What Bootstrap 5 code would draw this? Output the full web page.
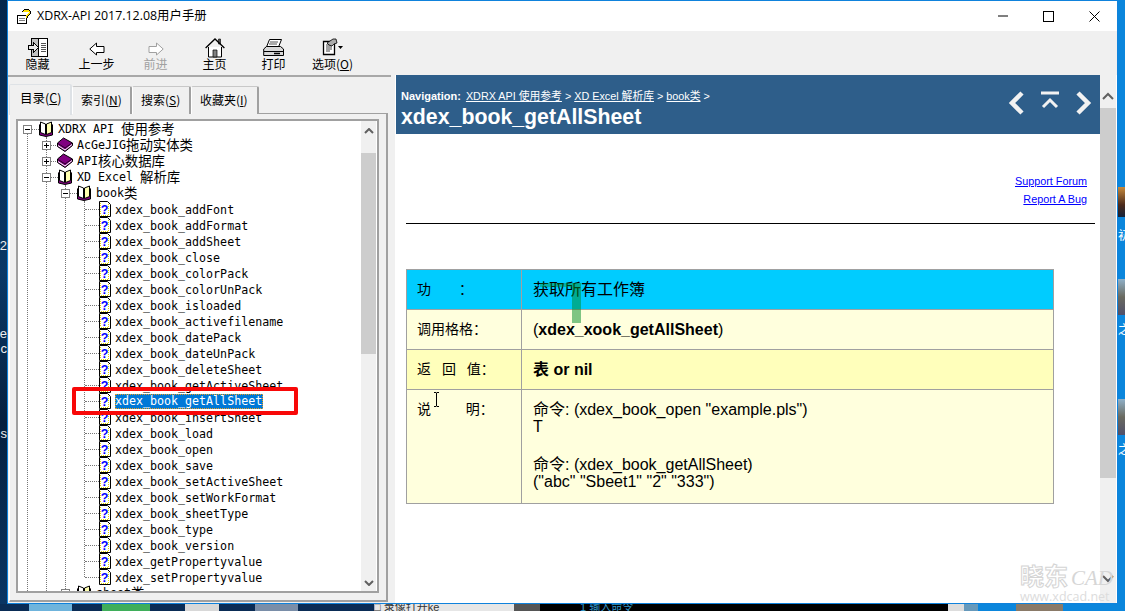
<!doctype html>
<html lang="zh-CN">
<head>
    <meta charset="utf-8">
    <meta name="viewport" content="width=device-width, initial-scale=1">
    <title>XDRX-API 2017.12.08用户手册</title>
    <link href="https://cdn.jsdelivr.net/npm/bootstrap@5.3.3/dist/css/bootstrap.min.css" rel="stylesheet">
    <style>
        html, body { height: 611px; overflow: hidden; }
        body { background: #0a2c55; font-family: "Liberation Sans", "Noto Sans CJK SC", sans-serif; color: #000; }

        /* desktop that shows around the window */
        .desk-left { width: 7px; height: 604px; overflow: hidden; background: linear-gradient(#04264c, #0a3866 45%, #06203f 70%, #0a3563); color: #eee; font-size: 13px; line-height: 15px; }
        .desk-left span { display: block; width: 7px; direction: rtl; white-space: nowrap; }
        .dl-a { margin-top: 238px; }
        .dl-b { margin-top: 73px; }
        .dl-c { margin-top: 70px; }
        .desk-right { width: 7px; height: 604px; overflow: hidden; background: #0b86dc; color: #fff; font-size: 12px; line-height: 14px; }
        .desk-thumb { height: 30px; margin-top: 187px; background: linear-gradient(#c78a3c, #4b2a1c 60%, #14223a); }
        .desk-thumb.grey-a { height: 36px; margin-top: 36px; background: linear-gradient(#8fb0c8, #6a6a60 50%, #50506a); }
        .desk-thumb.grey-b { height: 36px; margin-top: 62px; background: linear-gradient(#8fb0c8, #6a6a60 50%, #50506a); }
        .dr-a { margin-top: 12px; }
        .dr-b { margin-top: 8px; }
        .desk-bottom { height: 7px; overflow: hidden; background: #0a2c55; font-size: 11px; line-height: 7px; }
        .desk-bottom div { flex: none; height: 7px; white-space: nowrap; }
        .db-1 { width: 29px; }
        .db-2 { width: 43px; background: #6fb4dc; }
        .db-3 { width: 30px; }
        .db-4 { width: 48px; background: #3fae5a; }
        .db-5 { width: 35px; }
        .db-6 { width: 34px; background: #d8d8d8; }
        .db-7 { width: 36px; }
        .db-8 { width: 43px; background: #7a8ea8; }
        .db-9 { width: 76px; }
        .db-10 { width: 140px; background: #e6e6e6; color: #333; }
        .db-11 { width: 26px; background: #555; }
        .db-12 { width: 408px; background: #000; color: #39c; padding-left: 40px; }
        .db-13 { width: 16px; background: #ddd; }
        .db-14 { width: 14px; background: #69b; }
        .db-15 { width: 38px; background: #0b86dc; }
        .db-16 { width: 47px; background: #8a7a68; }
        .db-17 { width: 62px; background: #0b86dc; }

        /* window frame */
        .win { width: 1111px; height: 604px; border: 1px solid #0f82dc; background: #f0f0f0; position: relative; overflow: hidden; }
        .win-title { height: 30px; background: #fff; padding-left: 9px; font-family: "Open Sans", "Noto Sans CJK SC", sans-serif; font-size: 12.4px; }
        .win-icon { margin-right: 6px; }
        .win-ctl { width: 45.6px; height: 30px; }
        .win-tools { height: 44px; background: #f0f0f0; }
        .tool { width: 59px; height: 44px; padding: 3px 0 0; border: 0; border-radius: 0; font-family: "Noto Sans CJK SC", sans-serif; font-size: 12px; line-height: 14px; color: #000; }
        .tool svg { display: block; margin: 0 auto -1px; }
        .tool.disabled { color: #a0a0a0; opacity: 1; }
        .win-main { height: 528px; }

        /* left pane with tabs */
        .side { width: 383px; border-top: 2px solid #a8a8a8; padding: 7px 3px 0 1px; }
        .side .nav-tabs { border: 0; height: 29px; gap: 0; align-items: flex-end; font-family: "Noto Sans CJK SC", sans-serif; font-size: 12px; }
        .side .nav-link { height: 28px; padding: 3px 0 0 8px; color: #000; background: #f0f0f0; border: 0; border-top: 1px solid #c8c8c8; border-left: 1px solid #fff; border-right: 2px solid #a0a0a0; border-radius: 2px 2px 0 0; margin: 0; line-height: 20px; }
        .side .nav-link.active { height: 31px; margin-bottom: -1px; padding: 3px 0 0 10px; color: #000; background: #f0f0f0; position: relative; z-index: 1; font-size: 12.5px; }
        .tab-a { width: 63px; }
        .tab-b { width: 60px; }
        .tab-c { width: 59px; }
        .tab-d { width: 68px; }
        .side-panel { width: 379px; height: 489px; border-top: 1px solid #a0a0a0; border-right: 2px solid #a0a0a0; border-bottom: 2px solid #a0a0a0; border-left: 1px solid #fff; padding: 5px 0 0 6px; }
        .tree-box { width: 363px; height: 474px; border: 2px solid #a0a0a0; background: #fff; overflow: hidden; }
        .tree-view { width: 343px; height: 470px; overflow: hidden; font-family: "DejaVu Sans Mono", "Noto Sans CJK SC", monospace; font-size: 11.65px; }
        .tree-bar { width: 15px; height: 470px; background: #f0f0f0; }
        .tree-bar .bar-thumb { height: 201px; margin-top: 2px; background: #cdcdcd; }
        .tree-bar .bar-btn { height: 30px; padding-top: 7px; }
        .tree-down { padding-bottom: 5px; }
        .zh { font-size: 13.4px; vertical-align: -1px; }

        .tree { list-style: none; margin: 0 0 0 18px; padding: 0; border-left: 1px dotted #777; }
        .tree.root { margin-left: 9px; }
        .tree li { position: relative; }
        .node { height: 16px; white-space: nowrap; }
        .node > span { padding-top: 3px; }
        .tree-first::before, .tree-last::before { content: ""; position: absolute; left: -1px; width: 1px; background: #fff; }
        .tree-first::before { top: 0; height: 8px; }
        .tree-last::before { top: 9px; bottom: 0; }
        .expand { flex: none; width: 9px; height: 9px; margin-left: -5px; border: 1px solid #808080; position: relative; z-index: 1; background: linear-gradient(#000, #000) center / 5px 1px no-repeat #fff; }
        .expand.closed { background: linear-gradient(#000, #000) center / 5px 1px no-repeat, linear-gradient(#000, #000) center / 1px 5px no-repeat, #fff; }
        .dash { flex: none; width: 7px; border-top: 1px dotted #777; }
        .dash.long { width: 14px; }
        .node svg { flex: none; margin-right: 5px; }
        .node svg.shut { margin-left: -1px; margin-right: 4px; }
        .node svg.page { margin-right: 4px; }
        .node > span.picked { background: #0078d7; color: #fff; outline: 1px dotted #e8a020; outline-offset: -1px; padding: 0 1px 0 0; margin-top: 1px; line-height: 15px; height: 15px; }
        .red-box { position: absolute; left: -13px; top: -6px; width: 226px; height: 28px; border: 4px solid #f80808; border-radius: 2px; z-index: 2; }

        /* right pane, the help page */
        .page-area { flex: 1; min-width: 0; margin-left: 4px; background: #fff; }
        .page-body { width: 705px; height: 528px; padding-left: 1px; }
        .page-head { height: 59px; background: #2e5e8a; color: #fff; padding: 14px 8px 0 5px; }
        .page-nav { font-size: 10.8px; line-height: 14px; }
        .page-nav a { color: #fff; }
        .page-nav b { margin-right: 2px; font-size: 11px; }
        .page-name { font-size: 21.3px; line-height: 26px; font-weight: 700; margin: 1px 0 0; }
        .page-arrows { gap: 14px; margin-top: 2px; }
        .page-links { padding: 38px 13px 0 0; font-size: 10.8px; line-height: 18px; text-align: right; height: 89px; }
        .page-links a { color: #00f; display: block; }
        .page-rule { height: 1px; background: #000; margin: 0 5px 0 10px; opacity: 1; border: 0; }
        .info-wrap { position: relative; width: 648px; margin: 45px 0 0 10px; }
        .info { width: 648px; margin: 0; border-collapse: collapse; table-layout: fixed; font-size: 16px; line-height: 16.5px; }
        .info td { border: 1px solid #a0a0a0; padding: 1px 0 0 11px; height: 40px; background: #ffd; vertical-align: middle; }
        .info td.col-key { width: 115px; font-size: 14px; padding: 0 0 0 10px; }
        .info tr.row-top td { background: #0cf; }
        .info tr.row-ret td { background: #ffb; }
        .info tr.row-desc td { height: 114px; vertical-align: top; padding-top: 12px; }
        .info tr.row-desc td.col-key { padding-top: 11px; }
        .info tr.row-desc p { margin: 0 0 22px; }
        .info tr.row-desc p:last-child { margin: 0; }
        .green-a { position: absolute; left: 166px; top: 14px; width: 9px; height: 40px; background: rgba(0, 140, 40, .5); }
        .green-b { position: absolute; left: 134px; top: 14px; width: 32px; height: 4px; background: rgba(0, 140, 40, .4); }
        .beam { position: absolute; left: 27px; top: 123px; }
        .page-bar { width: 16px; height: 528px; background: #f0f0f0; }
        .page-bar .bar-thumb { height: 370px; background: #cdcdcd; }
        .page-bar .bar-btn { height: 33px; padding-top: 17px; }
        .page-down { padding-bottom: 20px; }
        .wm { position: absolute; right: 5px; bottom: -1px; width: 92px; color: #dcdcdc; z-index: 3; }
        .wm-big { font-size: 24px; line-height: 30px; margin-bottom: -3px; font-weight: 700; color: #fff; -webkit-text-stroke: 1px #d4d4d4; white-space: nowrap; }
        .wm-cad { font-family: "Liberation Serif", serif; font-style: italic; font-size: 21px; font-weight: 400; color: #d6d6d6; -webkit-text-stroke: 0; margin-left: 3px; }
        .wm-url { font-family: "Open Sans", sans-serif; font-size: 12.5px; line-height: 14px; white-space: nowrap; }
    </style>
</head>
<body>
    <!-- shared icons for the tree -->
    <svg width="0" height="0" class="d-block position-absolute">
        <symbol id="book-open" viewBox="0 0 14 16">
            <path d="M.5 3.500v10.500l6.500 1.500 6.500-1.500V3.500" fill="#800080" stroke="#000"/>
            <path d="M1.500 1 6.500 3v10.500l-5-2z" fill="#fff" stroke="#000"/>
            <path d="M12.500 1 7.500 3v10.500l5-2z" fill="#ffffb0" stroke="#000"/>
        </symbol>
        <symbol id="book-shut" viewBox="0 0 16 16">
            <path d="M.5 6 6.500 1l9 5v2.500L8 14.500.5 9.500z" fill="#800080" stroke="#000"/>
            <path d="M1 8.500 8 13l7-5.500" fill="none" stroke="#fff"/>
            <path d="M1 6.500 8 11l7-5" fill="none" stroke="#000" stroke-width=".7"/>
        </symbol>
        <symbol id="help-page" viewBox="0 0 12 16">
            <path d="M.5.5h8l3 3v12H.5z" fill="#fff" stroke="#000"/>
            <path d="M9.500 3v12M2 14.500h8M1.500 2v12" stroke="#e6d800" stroke-dasharray="1 1"/>
            <text x="5.600" y="12.500" text-anchor="middle" font-family="Liberation Sans" font-weight="700" font-size="12.500" fill="#00f">?</text>
        </symbol>
    </svg>

    <div class="d-flex">
        <div class="desk-left flex-shrink-0">
            <span class="dl-a">2</span>
            <span class="dl-b">e</span>
            <span>c</span>
            <span class="dl-c">s</span>
        </div>

        <div class="win flex-shrink-0">
            <div class="win-title d-flex align-items-center">
                <svg class="win-icon" width="14" height="16" viewBox="0 0 14 16" shape-rendering="crispEdges">
                    <path d="M.5 7.500h9v8h-9z" fill="#fff" stroke="#000"/>
                    <path d="M2 10h6M2 12h6" stroke="#808080"/>
                    <path d="M6 4a4 3.500 0 0 1 7 0c0 2-2 2.500-3 4v2" fill="none" stroke="#000" stroke-width="2.500"/>
                    <path d="M6.500 4a3.500 2.500 0 0 1 6 0c0 2-2 2.500-3 4v1.500" fill="none" stroke="#ffe000" stroke-width="1.500"/>
                </svg>
                <span>XDRX-API 2017.12.08用户手册</span>
                <div class="ms-auto d-flex">
                    <div class="win-ctl d-flex align-items-center justify-content-center"><svg width="10" height="10"><path d="M0 5h10" stroke="#000"/></svg></div>
                    <div class="win-ctl d-flex align-items-center justify-content-center"><svg width="11" height="11"><rect x=".5" y=".5" width="10" height="10" fill="none" stroke="#000"/></svg></div>
                    <div class="win-ctl d-flex align-items-center justify-content-center"><svg width="11" height="11"><path d="M.5.5l10 10M10.500.5l-10 10" stroke="#000"/></svg></div>
                </div>
            </div>

            <div class="win-tools d-flex">
                <button class="btn tool" type="button">
                    <svg width="20" height="20" viewBox="0 0 20 20" shape-rendering="crispEdges">
                        <rect x="3.500" y=".5" width="16" height="18" fill="#fff" stroke="#000"/>
                        <rect x="4" y="1" width="7" height="17" fill="#c0c0c0"/>
                        <path d="M10.500 1v17" stroke="#000"/>
                        <path d="M13 5h5M13 7h5M13 9h5M13 11h5M13 13h5" stroke="#555"/>
                        <path d="M.5 7.500h5v-3l5 5-5 5v-3h-5z" fill="#e8e8e8" stroke="#000"/>
                    </svg>
                    隐藏
                </button>
                <button class="btn tool" type="button">
                    <svg width="16" height="20" viewBox="0 0 16 20"><path d="M.8 11 7.500 5v3.500h7.500v6H7.500V17z" fill="#fff" stroke="#000"/></svg>
                    上一步
                </button>
                <button class="btn tool disabled" type="button">
                    <svg width="16" height="20" viewBox="0 0 16 20"><path d="M15.200 11 8.500 5v3.500H1v6h7.500V17z" fill="#fff" stroke="#a0a0a0"/></svg>
                    前进
                </button>
                <button class="btn tool" type="button">
                    <svg width="20" height="20" viewBox="0 0 20 20">
                        <path d="M13.500 1h2v5h-2z" fill="#555" stroke="#000" stroke-width=".6"/>
                        <path d="M3.500 9v10h13V9" fill="#fff" stroke="#000"/>
                        <path d="M.6 10 10 1l9.400 9" fill="none" stroke="#000" stroke-width="1.300"/>
                        <path d="M8 12h4v7H8z" fill="#808080" stroke="#000" stroke-width=".7"/>
                    </svg>
                    主页
                </button>
                <button class="btn tool" type="button">
                    <svg width="21" height="20" viewBox="0 0 21 20">
                        <path d="M6.500 1.500h12L15.500 9h-12z" fill="#fff" stroke="#000"/>
                        <path d="M7 4h8M6 6h8" stroke="#555"/>
                        <path d="M.7 11 3.500 8.500h14l3 2.500v6.500H.7z" fill="#d8d8d8" stroke="#000"/>
                        <path d="M1 13.500h19" stroke="#000"/>
                        <path d="M11 15.500h6" stroke="#000" stroke-width="1.500"/>
                    </svg>
                    打印
                </button>
                <button class="btn tool" type="button">
                    <svg width="22" height="20" viewBox="0 0 22 20">
                        <path d="M1.500 3.500h11v13h-11z" fill="#fff" stroke="#000" stroke-width="1.300"/>
                        <path d="M4 7h6M4 9h6M4 11h6M4 13h4" stroke="#444"/>
                        <path d="M5 5 11 1h3l1 4-3 1-2 2-3-1z" fill="#aaa" stroke="#000" stroke-width=".8"/>
                        <path d="M16 8h5l-2.500 3z" fill="#000"/>
                    </svg>
                    选项(<u>O</u>)
                </button>
            </div>

            <div class="win-main d-flex">
                <div class="side flex-shrink-0">
                    <ul class="nav nav-tabs">
                        <li class="nav-item"><a class="nav-link active tab-a" href="#">目录(<u>C</u>)</a></li>
                        <li class="nav-item"><a class="nav-link tab-b" href="#">索引(<u>N</u>)</a></li>
                        <li class="nav-item"><a class="nav-link tab-c" href="#">搜索(<u>S</u>)</a></li>
                        <li class="nav-item"><a class="nav-link tab-d" href="#">收藏夹(<u>I</u>)</a></li>
                    </ul>
                    <div class="side-panel">
                        <div class="tree-box d-flex">
                            <div class="tree-view flex-shrink-0">
                                <ul class="tree root">
                                    <li class="tree-first">
                                        <div class="node d-flex align-items-center"><i class="expand"></i><i class="dash"></i><svg width="14" height="16"><use href="#book-open"/></svg><span>XDRX API <span class="zh">使用参考</span></span></div>
                                        <ul class="tree">
                                            <li><div class="node d-flex align-items-center"><i class="expand closed"></i><i class="dash"></i><svg class="shut" width="16" height="16"><use href="#book-shut"/></svg><span>AcGeJIG<span class="zh">拖动实体类</span></span></div></li>
                                            <li><div class="node d-flex align-items-center"><i class="expand closed"></i><i class="dash"></i><svg class="shut" width="16" height="16"><use href="#book-shut"/></svg><span>API<span class="zh">核心数据库</span></span></div></li>
                                            <li>
                                                <div class="node d-flex align-items-center"><i class="expand"></i><i class="dash"></i><svg width="14" height="16"><use href="#book-open"/></svg><span>XD Excel <span class="zh">解析库</span></span></div>
                                                <ul class="tree">
                                                    <li>
                                                        <div class="node d-flex align-items-center"><i class="expand"></i><i class="dash"></i><svg width="14" height="16"><use href="#book-open"/></svg><span>book<span class="zh">类</span></span></div>
                                                        <ul class="tree">
                                                            <li><div class="node d-flex align-items-center"><i class="dash long"></i><svg class="page" width="12" height="16"><use href="#help-page"/></svg><span>xdex_book_addFont</span></div></li>
                                                            <li><div class="node d-flex align-items-center"><i class="dash long"></i><svg class="page" width="12" height="16"><use href="#help-page"/></svg><span>xdex_book_addFormat</span></div></li>
                                                            <li><div class="node d-flex align-items-center"><i class="dash long"></i><svg class="page" width="12" height="16"><use href="#help-page"/></svg><span>xdex_book_addSheet</span></div></li>
                                                            <li><div class="node d-flex align-items-center"><i class="dash long"></i><svg class="page" width="12" height="16"><use href="#help-page"/></svg><span>xdex_book_close</span></div></li>
                                                            <li><div class="node d-flex align-items-center"><i class="dash long"></i><svg class="page" width="12" height="16"><use href="#help-page"/></svg><span>xdex_book_colorPack</span></div></li>
                                                            <li><div class="node d-flex align-items-center"><i class="dash long"></i><svg class="page" width="12" height="16"><use href="#help-page"/></svg><span>xdex_book_colorUnPack</span></div></li>
                                                            <li><div class="node d-flex align-items-center"><i class="dash long"></i><svg class="page" width="12" height="16"><use href="#help-page"/></svg><span>xdex_book_isloaded</span></div></li>
                                                            <li><div class="node d-flex align-items-center"><i class="dash long"></i><svg class="page" width="12" height="16"><use href="#help-page"/></svg><span>xdex_book_activefilename</span></div></li>
                                                            <li><div class="node d-flex align-items-center"><i class="dash long"></i><svg class="page" width="12" height="16"><use href="#help-page"/></svg><span>xdex_book_datePack</span></div></li>
                                                            <li><div class="node d-flex align-items-center"><i class="dash long"></i><svg class="page" width="12" height="16"><use href="#help-page"/></svg><span>xdex_book_dateUnPack</span></div></li>
                                                            <li><div class="node d-flex align-items-center"><i class="dash long"></i><svg class="page" width="12" height="16"><use href="#help-page"/></svg><span>xdex_book_deleteSheet</span></div></li>
                                                            <li><div class="node d-flex align-items-center"><i class="dash long"></i><svg class="page" width="12" height="16"><use href="#help-page"/></svg><span>xdex_book_getActiveSheet</span></div></li>
                                                            <li>
                                                                <div class="node d-flex align-items-center"><i class="dash long"></i><svg class="page" width="12" height="16"><use href="#help-page"/></svg><span class="picked">xdex_book_getAllSheet</span></div>
                                                                <div class="red-box"></div>
                                                            </li>
                                                            <li><div class="node d-flex align-items-center"><i class="dash long"></i><svg class="page" width="12" height="16"><use href="#help-page"/></svg><span>xdex_book_insertSheet</span></div></li>
                                                            <li><div class="node d-flex align-items-center"><i class="dash long"></i><svg class="page" width="12" height="16"><use href="#help-page"/></svg><span>xdex_book_load</span></div></li>
                                                            <li><div class="node d-flex align-items-center"><i class="dash long"></i><svg class="page" width="12" height="16"><use href="#help-page"/></svg><span>xdex_book_open</span></div></li>
                                                            <li><div class="node d-flex align-items-center"><i class="dash long"></i><svg class="page" width="12" height="16"><use href="#help-page"/></svg><span>xdex_book_save</span></div></li>
                                                            <li><div class="node d-flex align-items-center"><i class="dash long"></i><svg class="page" width="12" height="16"><use href="#help-page"/></svg><span>xdex_book_setActiveSheet</span></div></li>
                                                            <li><div class="node d-flex align-items-center"><i class="dash long"></i><svg class="page" width="12" height="16"><use href="#help-page"/></svg><span>xdex_book_setWorkFormat</span></div></li>
                                                            <li><div class="node d-flex align-items-center"><i class="dash long"></i><svg class="page" width="12" height="16"><use href="#help-page"/></svg><span>xdex_book_sheetType</span></div></li>
                                                            <li><div class="node d-flex align-items-center"><i class="dash long"></i><svg class="page" width="12" height="16"><use href="#help-page"/></svg><span>xdex_book_type</span></div></li>
                                                            <li><div class="node d-flex align-items-center"><i class="dash long"></i><svg class="page" width="12" height="16"><use href="#help-page"/></svg><span>xdex_book_version</span></div></li>
                                                            <li><div class="node d-flex align-items-center"><i class="dash long"></i><svg class="page" width="12" height="16"><use href="#help-page"/></svg><span>xdex_getPropertyvalue</span></div></li>
                                                            <li class="tree-last"><div class="node d-flex align-items-center"><i class="dash long"></i><svg class="page" width="12" height="16"><use href="#help-page"/></svg><span>xdex_setPropertyvalue</span></div></li>
                                                        </ul>
                                                    </li>
                                                    <li><div class="node d-flex align-items-center"><i class="expand"></i><i class="dash"></i><svg width="14" height="16"><use href="#book-open"/></svg><span>sheet<span class="zh">类</span></span></div></li>
                                                </ul>
                                            </li>
                                        </ul>
                                    </li>
                                </ul>
                            </div>
                            <div class="tree-bar flex-shrink-0 d-flex flex-column">
                                <div class="bar-btn d-flex justify-content-center">
                                    <svg width="10" height="6"><path d="M1 5 5 1l4 4" fill="none" stroke="#606060" stroke-width="2"/></svg>
                                </div>
                                <div class="bar-thumb"></div>
                                <div class="d-flex justify-content-center tree-down mt-auto">
                                    <svg width="10" height="6"><path d="M1 1l4 4 4-4" fill="none" stroke="#606060" stroke-width="2"/></svg>
                                </div>
                            </div>
                        </div>
                    </div>
                </div>

                <div class="page-area d-flex position-relative">
                    <div class="page-body flex-shrink-0">
                        <div class="page-head d-flex justify-content-between">
                            <div>
                                <div class="page-nav"><b>Navigation:</b> <a href="#">XDRX API 使用参考</a> &gt; <a href="#">XD Excel 解析库</a> &gt; <a href="#">book类</a> &gt;</div>
                                <h1 class="page-name">xdex_book_getAllSheet</h1>
                            </div>
                            <div class="page-arrows d-flex">
                                <svg width="18" height="24" viewBox="0 0 18 24"><path d="M14 2 4 12l10 10" fill="none" stroke="#f2f2f2" stroke-width="4.500"/></svg>
                                <svg width="20" height="24" viewBox="0 0 20 24"><path d="M1 2h18" stroke="#f2f2f2" stroke-width="3"/><path d="M3 16l7-7 7 7" fill="none" stroke="#f2f2f2" stroke-width="3"/></svg>
                                <svg width="18" height="24" viewBox="0 0 18 24"><path d="M4 2l10 10L4 22" fill="none" stroke="#f2f2f2" stroke-width="4.500"/></svg>
                            </div>
                        </div>
                        <div class="page-links">
                            <a href="#">Support Forum</a>
                            <a href="#">Report A Bug</a>
                        </div>
                        <hr class="page-rule">
                        <div class="info-wrap">
                            <table class="info">
                                <tr class="row-top"><td class="col-key">功　　：</td><td>获取所有工作簿</td></tr>
                                <tr><td class="col-key">调用格格：</td><td>(<b>xdex_xook_getAllSheet</b>)</td></tr>
                                <tr class="row-ret"><td class="col-key">返&nbsp;&ensp;回&nbsp;&ensp;值：</td><td><b>表 or nil</b></td></tr>
                                <tr class="row-desc">
                                    <td class="col-key">说　　&nbsp;&thinsp;明：</td>
                                    <td>
                                        <p>命令: (xdex_book_open "example.pls")<br>T</p>
                                        <p>命令: (xdex_book_getAllSheet)<br>("abc" "Sbeet1" "2" "333")</p>
                                    </td>
                                </tr>
                            </table>
                            <div class="green-a"></div>
                            <div class="green-b"></div>
                            <svg class="beam" width="7" height="15"><path d="M1 .5h2l.5.5.5-.5h2M3.500 1v13M1 14.500h2l.5-.5.5.5h2" fill="none" stroke="#000"/></svg>
                        </div>
                    </div>
                    <div class="page-bar flex-shrink-0 d-flex flex-column">
                        <div class="bar-btn d-flex justify-content-center">
                            <svg width="12" height="8"><path d="M1 7l5-5 5 5" fill="none" stroke="#606060" stroke-width="2"/></svg>
                        </div>
                        <div class="bar-thumb"></div>
                        <div class="page-down d-flex justify-content-center mt-auto">
                            <svg width="12" height="8"><path d="M1 1l5 5 5-5" fill="none" stroke="#606060" stroke-width="2"/></svg>
                        </div>
                    </div>
                    <div class="wm">
                        <div class="wm-big">晓东<span class="wm-cad">CAD</span></div>
                        <div class="wm-url">www.xdcad.net</div>
                    </div>
                </div>
            </div>
        </div>

        <div class="desk-right flex-shrink-0">
            <div class="desk-thumb"></div>
            <div class="text-nowrap dr-a">初</div>
            <div class="desk-thumb grey-a"></div>
            <div class="text-nowrap dr-b">之</div>
            <div class="desk-thumb grey-b"></div>
            <div class="text-nowrap dr-b">之</div>
        </div>
    </div>

    <div class="desk-bottom d-flex">
        <div class="db-1"></div>
        <div class="db-2"></div>
        <div class="db-3"></div>
        <div class="db-4"></div>
        <div class="db-5"></div>
        <div class="db-6"></div>
        <div class="db-7"></div>
        <div class="db-8"></div>
        <div class="db-9"></div>
        <div class="db-10">□ 录像打开ke</div>
        <div class="db-11"></div>
        <div class="db-12">1 输入命令</div>
        <div class="db-13"></div>
        <div class="db-14"></div>
        <div class="db-15"></div>
        <div class="db-16"></div>
        <div class="db-17"></div>
    </div>
</body>
</html>
